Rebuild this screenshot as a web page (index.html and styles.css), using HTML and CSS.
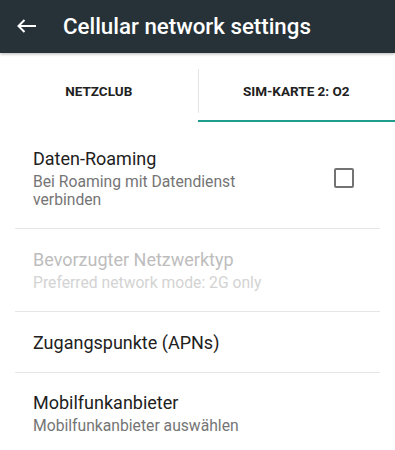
FILE: index.html
```html
<!DOCTYPE html>
<html lang="de">
<head>
  <meta charset="UTF-8">
  <meta name="viewport" content="width=device-width, initial-scale=1.0">
  <title>Cellular network settings</title>
  <link rel="stylesheet" href="styles.css">
</head>
<body>
  <header class="toolbar">
    <svg class="back" width="20" height="14" viewBox="0 0 20 14">
      <path d="M1.5 7 H19 M7.5 1 L1.5 7 L7.5 13" fill="none" stroke="#fff" stroke-width="2"/>
    </svg>
    <h1>Cellular network settings</h1>
  </header>

  <nav class="tabs">
    <div class="tab">NETZCLUB</div>
    <div class="tab active">SIM-KARTE 2: O2</div>
  </nav>

  <ul class="prefs">
    <li class="pref first">
      <div class="text">
        <div class="title">Daten-Roaming</div>
        <div class="summary">Bei Roaming mit Datendienst<br>verbinden</div>
      </div>
      <span class="checkbox"></span>
    </li>
    <li class="pref disabled">
      <div class="text">
        <div class="title">Bevorzugter Netzwerktyp</div>
        <div class="summary">Preferred network mode: 2G only</div>
      </div>
    </li>
    <li class="pref single">
      <div class="text">
        <div class="title">Zugangspunkte (APNs)</div>
      </div>
    </li>
    <li class="pref last">
      <div class="text">
        <div class="title">Mobilfunkanbieter</div>
        <div class="summary">Mobilfunkanbieter auswählen</div>
      </div>
    </li>
  </ul>
</body>
</html>
```

FILE: styles.css
```css
* {
  box-sizing: border-box;
}
body {
  margin: 0;
  background: #fff;
  font-family: Roboto, "Noto Sans", sans-serif;
  overflow: hidden;
}

/* toolbar */
.toolbar {
  height: 53px;
  background: #263238;
  display: flex;
  align-items: center;
  padding-left: 17px;
  box-shadow: 0 1px 3px rgba(0, 0, 0, 0.3);
  position: relative;
  z-index: 1;
}
.back {
  display: block;
  margin-top: -1px;
}
.toolbar h1 {
  margin: -1px 0 0 26px;
  color: #fff;
  font-size: 22.3px;
  font-weight: 500;
}

/* tabs */
.tabs {
  display: flex;
  height: 69px;
}
.tab {
  flex: 1;
  display: flex;
  align-items: center;
  justify-content: center;
  padding-top: 7px;
  font-size: 13.5px;
  font-weight: 700;
  color: #212121;
  position: relative;
}
.tab.active {
  border-bottom: 2px solid #1e9c8c;
  padding-top: 9px;
}
.tab.active::before {
  content: '';
  position: absolute;
  left: 0;
  top: 16px;
  height: 44px;
  border-left: 1px solid #e4e4e4;
}

/* preference list */
.prefs {
  list-style: none;
  margin: 0;
  padding: 0;
}
.pref {
  display: flex;
  align-items: center;
  margin: 0 15px;
  padding: 19px 18px 19.5px 18px;
  border-top: 1px solid #e6e6e6;
}
.pref.first {
  border-top: 0;
  padding-top: 25px;
  padding-bottom: 20px;
}
.pref.single {
  padding-bottom: 17px;
}
.pref.last {
  padding-top: 18px;
}
.text {
  flex: 1;
}
.title {
  font-size: 18px;
  line-height: 24px;
  color: #212121;
}
.summary {
  margin-top: 2px;
  font-size: 15.7px;
  line-height: 17.5px;
  color: #757575;
}
.disabled .title {
  color: #bdbdbd;
}
.disabled .summary {
  color: #d3d3d3;
}
.checkbox {
  width: 20px;
  height: 20px;
  border: 2px solid #737373;
  border-radius: 2px;
  margin-right: 8px;
}
```
